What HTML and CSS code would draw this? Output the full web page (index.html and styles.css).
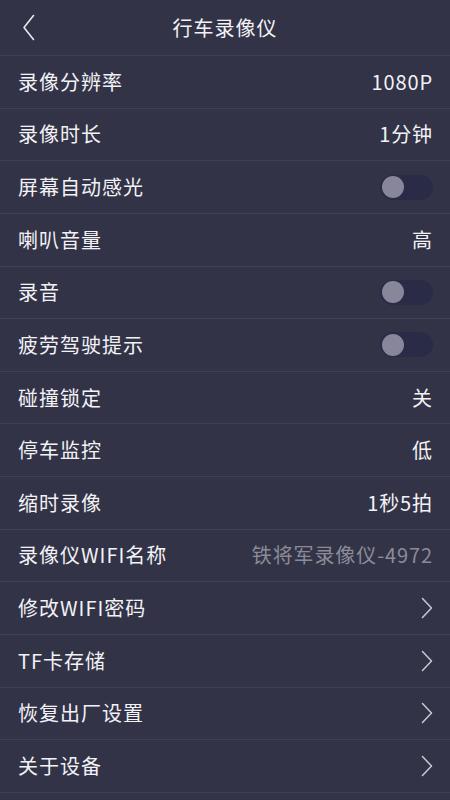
FILE: index.html
```html
<!DOCTYPE html>
<html lang="zh-CN">
<head>
<meta charset="utf-8">
<title>行车录像仪</title>
<link rel="stylesheet" href="styles.css">
</head>
<body>
<div class="page">
  <header class="topbar">
    <svg class="back" width="14" height="28" viewBox="0 0 14 28"><path d="M11.5 1.5 L2 13.5 L11.5 25.5" fill="none" stroke="#e8e8ee" stroke-width="1.6" stroke-linecap="round" stroke-linejoin="round"/></svg>
    <h1 class="title">行车录像仪</h1>
  </header>
  <ul class="list">
    <li class="row"><span class="label">录像分辨率</span><span class="value">1080P</span></li>
    <li class="row"><span class="label">录像时长</span><span class="value">1分钟</span></li>
    <li class="row"><span class="label">屏幕自动感光</span><span class="switch"><span class="knob"></span></span></li>
    <li class="row"><span class="label">喇叭音量</span><span class="value">高</span></li>
    <li class="row"><span class="label">录音</span><span class="switch"><span class="knob"></span></span></li>
    <li class="row"><span class="label">疲劳驾驶提示</span><span class="switch"><span class="knob"></span></span></li>
    <li class="row"><span class="label">碰撞锁定</span><span class="value">关</span></li>
    <li class="row"><span class="label">停车监控</span><span class="value">低</span></li>
    <li class="row"><span class="label">缩时录像</span><span class="value">1秒5拍</span></li>
    <li class="row"><span class="label">录像仪WIFI名称</span><span class="value muted">铁将军录像仪-4972</span></li>
    <li class="row"><span class="label">修改WIFI密码</span><svg class="arrow" width="12" height="22" viewBox="0 0 12 22"><path d="M1.5 1.5 L10.5 11 L1.5 20.5" fill="none" stroke="#c9c9d2" stroke-width="1.5" stroke-linecap="round" stroke-linejoin="round"/></svg></li>
    <li class="row"><span class="label">TF卡存储</span><svg class="arrow" width="12" height="22" viewBox="0 0 12 22"><path d="M1.5 1.5 L10.5 11 L1.5 20.5" fill="none" stroke="#c9c9d2" stroke-width="1.5" stroke-linecap="round" stroke-linejoin="round"/></svg></li>
    <li class="row"><span class="label">恢复出厂设置</span><svg class="arrow" width="12" height="22" viewBox="0 0 12 22"><path d="M1.5 1.5 L10.5 11 L1.5 20.5" fill="none" stroke="#c9c9d2" stroke-width="1.5" stroke-linecap="round" stroke-linejoin="round"/></svg></li>
    <li class="row"><span class="label">关于设备</span><svg class="arrow" width="12" height="22" viewBox="0 0 12 22"><path d="M1.5 1.5 L10.5 11 L1.5 20.5" fill="none" stroke="#c9c9d2" stroke-width="1.5" stroke-linecap="round" stroke-linejoin="round"/></svg></li>
  </ul>
</div>
</body>
</html>
```
FILE: styles.css
```css
* { box-sizing: border-box; }
html, body {
  margin: 0;
  padding: 0;
  background: #323347;
}
body {
  font-family: "Noto Sans CJK SC", "Noto Sans", sans-serif;
  color: #f2f2f6;
  width: 450px;
  height: 800px;
  overflow: hidden;
}
.page { display: flex; flex-direction: column; }
.topbar {
  height: 56px;
  border-bottom: 1px solid #3f4056;
  display: flex;
  align-items: center;
  justify-content: center;
  position: relative;
}
.back {
  position: absolute;
  left: 22px;
  top: 14px;
}
.title {
  margin: 0;
  font-size: 20px;
  font-weight: 400;
  line-height: 1;
  letter-spacing: 1px;
}
.list {
  list-style: none;
  margin: 0;
  padding: 0;
}
.row {
  height: 52.64px;
  border-bottom: 1px solid #3f4056;
  display: flex;
  align-items: center;
  justify-content: space-between;
  padding: 0 18px 0 18px;
}
.label {
  font-size: 20px;
  line-height: 1;
  letter-spacing: 1px;
}
.value {
  font-size: 20px;
  line-height: 1;
  letter-spacing: 0.9px;
  margin-right: -1px;
}
.value.muted { color: #8b8b97; }
.switch {
  width: 53px;
  height: 25px;
  border-radius: 13px;
  background: #2a2b47;
  display: flex;
  align-items: center;
  padding-left: 2px;
  margin-right: -1px;
}
.knob {
  width: 22px;
  height: 22px;
  border-radius: 50%;
  background: #87869a;
}
.arrow { margin-right: -1px; }
```
